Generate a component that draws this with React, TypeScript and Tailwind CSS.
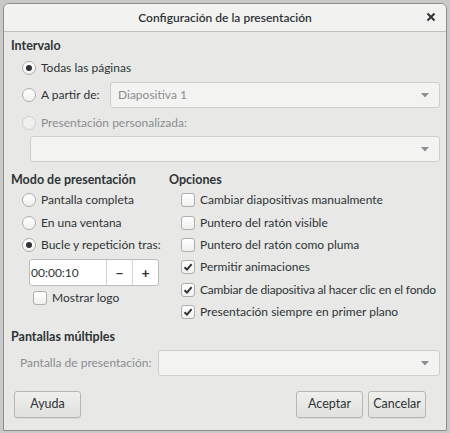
import React from "react";

const font = { fontFamily: 'Lato, "Noto Sans", "DejaVu Sans", sans-serif' };

function Radio({ checked, disabled }: { checked?: boolean; disabled?: boolean }) {
  return (
    <span
      className={`flex h-[14px] w-[14px] shrink-0 items-center justify-center rounded-full border ${
        disabled ? "border-[#cfcfcc] bg-[#f0f0ef]" : "border-[#aeaeab] bg-gradient-to-b from-white to-[#f0f0ef]"
      }`}
    >
      {checked && <span className="h-[6px] w-[6px] rounded-full bg-[#2e3436]" />}
    </span>
  );
}

function Check({ checked }: { checked?: boolean }) {
  return (
    <span className="flex h-[14px] w-[14px] shrink-0 items-center justify-center rounded-[3px] border border-[#aeaeab] bg-gradient-to-b from-white to-[#f0f0ef]">
      {checked && (
        <svg width="10" height="10" viewBox="0 0 10 10">
          <path d="M1.5 5.2 L4 7.6 L8.6 2.2" fill="none" stroke="#2e3436" strokeWidth="2" />
        </svg>
      )}
    </span>
  );
}

function Combo({ text, className }: { text?: string; className: string }) {
  return (
    <div
      className={`flex h-[26px] items-center justify-between rounded-[3px] border border-[#cfcfcc] bg-[#f3f3f2] pl-[7px] pr-[10px] text-[#8b8e8f] ${className}`}
    >
      <span>{text}</span>
      <svg width="8" height="5" viewBox="0 0 8 5">
        <path d="M0 0 H8 L4 4.5 Z" fill="#8b8e8f" />
      </svg>
    </div>
  );
}

function Btn({ label, className }: { label: string; className: string }) {
  return (
    <div
      className={`flex h-[27px] items-center justify-center rounded-[3px] border border-[#b6b6b3] bg-gradient-to-b from-[#efefed] to-[#e1e1de] text-[12.5px] text-[#2e3436] shadow-[0_1px_0_rgba(0,0,0,0.06)] ${className}`}
    >
      {label}
    </div>
  );
}

function Heading({ children }: { children: React.ReactNode }) {
  return <div className="flex h-[18px] items-center text-[12.5px] font-bold">{children}</div>;
}

const options: [string, boolean][] = [
  ["Cambiar diapositivas manualmente", false],
  ["Puntero del ratón visible", false],
  ["Puntero del ratón como pluma", false],
  ["Permitir animaciones", true],
  ["Cambiar de diapositiva al hacer clic en el fondo", true],
  ["Presentación siempre en primer plano", true],
];

export default function App() {
  return (
    <div className="h-[433px] w-[450px] overflow-hidden bg-[#c9c9c7] pl-[3px] pt-[3px]" style={font}>
      <div className="flex h-[428px] w-[444px] flex-col overflow-hidden whitespace-nowrap rounded-t-[6px] border border-[#8e8e8c] bg-[#e8e8e7] text-[12px] text-[#2e3436]">
        <div className="relative flex h-[28px] shrink-0 items-center justify-center border-b border-[#bdbdba] bg-[#f2f2f1]">
          <span className="text-[12px] font-semibold">Configuración de la presentación</span>
          <span className="absolute right-[10px] top-[8px]">
            <svg width="10" height="10" viewBox="0 0 10 10">
              <path d="M1.5 1.5 L8.5 8.5 M8.5 1.5 L1.5 8.5" stroke="#2e3436" strokeWidth="2" />
            </svg>
          </span>
        </div>

        <div className="flex flex-col pl-[7px] pr-[6px] pt-[5px]">
          <Heading>Intervalo</Heading>

          <div className="mt-[2px] flex h-[22px] items-center gap-[5px] pl-[11px]">
            <Radio checked />
            <span>Todas las páginas</span>
          </div>

          <div className="mt-[3px] flex h-[26px] items-center pl-[11px]">
            <Radio />
            <span className="ml-[5px] w-[69px]">A partir de:</span>
            <Combo text="Diapositiva 1" className="flex-1" />
          </div>

          <div className="mt-[4px] flex h-[22px] items-center gap-[5px] pl-[11px] text-[#8b8e8f]">
            <Radio disabled />
            <span>Presentación personalizada:</span>
          </div>

          <div className="mt-[2px] pl-[19px]">
            <Combo className="w-full" />
          </div>

          <div className="mt-[9px] flex">
            <div className="flex w-[158px] shrink-0 flex-col">
              <Heading>Modo de presentación</Heading>
              <div className="flex h-[22.5px] items-center gap-[5px] pl-[11px]">
                <Radio />
                <span>Pantalla completa</span>
              </div>
              <div className="flex h-[22.5px] items-center gap-[5px] pl-[11px]">
                <Radio />
                <span>En una ventana</span>
              </div>
              <div className="flex h-[22.5px] items-center gap-[5px] pl-[11px]">
                <Radio checked />
                <span>Bucle y repetición tras:</span>
              </div>
              <div className="ml-[18px] mt-[2.5px] flex h-[27px] w-[130px] overflow-hidden rounded-[3px] border border-[#bdbdba] bg-white">
                <span className="flex flex-1 items-center pl-[1px]">00:00:10</span>
                <span className="flex w-[26px] items-center justify-center border-l border-[#d6d6d4] text-[14px] font-bold">−</span>
                <span className="flex w-[26px] items-center justify-center border-l border-[#d6d6d4] text-[14px] font-bold">+</span>
              </div>
              <div className="mt-[1px] flex h-[22px] items-center gap-[5px] pl-[22px]">
                <Check />
                <span>Mostrar logo</span>
              </div>
            </div>

            <div className="flex min-w-0 flex-col">
              <Heading>Opciones</Heading>
              {options.map(([label, on]) => (
                <div key={label} className="flex h-[22.4px] items-center gap-[5px] pl-[12px]">
                  <Check checked={on} />
                  <span className={label.length > 40 ? "tracking-[-0.2px]" : ""}>{label}</span>
                </div>
              ))}
            </div>
          </div>

          <div className="mt-[5px]">
            <Heading>Pantallas múltiples</Heading>
          </div>

          <div className="mt-[4px] flex h-[26px] items-center pl-[9px]">
            <span className="w-[138px] text-[#8b8e8f]">Pantalla de presentación:</span>
            <Combo className="flex-1" />
          </div>

          <div className="mt-[15px] flex items-center pl-[3px] pr-[14px]">
            <Btn label="Ayuda" className="w-[67px]" />
            <div className="flex-1" />
            <Btn label="Aceptar" className="w-[67px]" />
            <Btn label="Cancelar" className="ml-[5px] w-[58px]" />
          </div>
        </div>
      </div>
    </div>
  );
}
